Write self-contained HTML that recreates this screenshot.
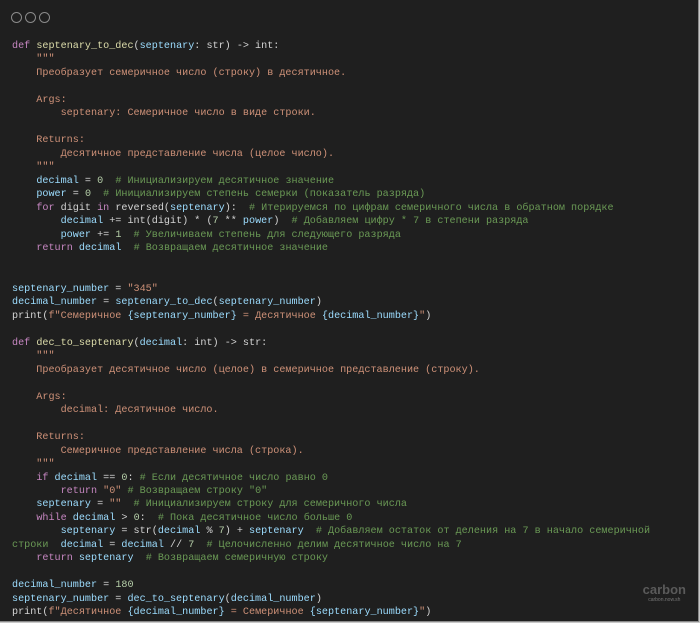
<!DOCTYPE html>
<html><head><meta charset="utf-8"><style>
html,body{margin:0;padding:0;width:700px;height:623px;overflow:hidden;background:#c8c8c8}
.win{position:absolute;left:0;top:0;width:698px;height:621px;background:#1f1f1f;border-right:1px solid #8a8a8a;border-bottom:1px solid #8a8a8a}
.dot{position:absolute;top:12px;width:9px;height:9px;border:1px solid #8a8a8a;border-radius:50%}
pre{position:absolute;left:12px;top:40px;margin:0;font-family:"Liberation Mono","Noto Sans CJK SC",monospace;font-size:10.13px;line-height:13.48px;color:#d4d4d4;white-space:pre}
.k{color:#c586c0}.f{color:#dcdcaa}.p{color:#9cdcfe}.s{color:#ce9178}.c{color:#6a9955}.n{color:#b5cea8}
.logo{position:absolute;right:12px;bottom:18px;color:#5a5a5a;font-family:"Liberation Sans",sans-serif;font-size:13px;font-weight:bold;text-align:center}
.logo small{display:block;font-size:5px;font-weight:normal;color:#777}
</style></head><body><div class="win">
<div class="dot" style="left:11px"></div><div class="dot" style="left:25px"></div><div class="dot" style="left:39px"></div>
<pre><span class="k">def</span> <span class="f">septenary_to_dec</span>(<span class="p">septenary</span>: str) -&gt; int:
<span class="s">    """
    Преобразует семеричное число (строку) в десятичное.

    Args:
        septenary: Семеричное число в виде строки.

    Returns:
        Десятичное представление числа (целое число).
    """</span>
    <span class="p">decimal</span> = <span class="n">0</span>  <span class="c"># Инициализируем десятичное значение</span>
    <span class="p">power</span> = <span class="n">0</span>  <span class="c"># Инициализируем степень семерки (показатель разряда)</span>
    <span class="k">for</span> digit <span class="k">in</span> reversed(<span class="p">septenary</span>):  <span class="c"># Итерируемся по цифрам семеричного числа в обратном порядке</span>
        <span class="p">decimal</span> += int(digit) * (<span class="n">7</span> ** <span class="p">power</span>)  <span class="c"># Добавляем цифру * 7 в степени разряда</span>
        <span class="p">power</span> += <span class="n">1</span>  <span class="c"># Увеличиваем степень для следующего разряда</span>
    <span class="k">return</span> <span class="p">decimal</span>  <span class="c"># Возвращаем десятичное значение</span>


<span class="p">septenary_number</span> = <span class="s">"345"</span>
<span class="p">decimal_number</span> = <span class="p">septenary_to_dec</span>(<span class="p">septenary_number</span>)
print(<span class="s">f"Семеричное </span><span class="p">{septenary_number}</span><span class="s"> = Десятичное </span><span class="p">{decimal_number}</span><span class="s">"</span>)

<span class="k">def</span> <span class="f">dec_to_septenary</span>(<span class="p">decimal</span>: int) -&gt; str:
<span class="s">    """
    Преобразует десятичное число (целое) в семеричное представление (строку).

    Args:
        decimal: Десятичное число.

    Returns:
        Семеричное представление числа (строка).
    """</span>
    <span class="k">if</span> <span class="p">decimal</span> == <span class="n">0</span>: <span class="c"># Если десятичное число равно 0</span>
        <span class="k">return</span> <span class="s">"0"</span> <span class="c"># Возвращаем строку "0"</span>
    <span class="p">septenary</span> = <span class="s">""</span>  <span class="c"># Инициализируем строку для семеричного числа</span>
    <span class="k">while</span> <span class="p">decimal</span> &gt; <span class="n">0</span>:  <span class="c"># Пока десятичное число больше 0</span>
        <span class="p">septenary</span> = str(<span class="p">decimal</span> % <span class="n">7</span>) + <span class="p">septenary</span>  <span class="c"># Добавляем остаток от деления на 7 в начало семеричной</span>
<span class="c">строки</span>  <span class="p">decimal</span> = <span class="p">decimal</span> // <span class="n">7</span>  <span class="c"># Целочисленно делим десятичное число на 7</span>
    <span class="k">return</span> <span class="p">septenary</span>  <span class="c"># Возвращаем семеричную строку</span>

<span class="p">decimal_number</span> = <span class="n">180</span>
<span class="p">septenary_number</span> = <span class="p">dec_to_septenary</span>(<span class="p">decimal_number</span>)
print(<span class="s">f"Десятичное </span><span class="p">{decimal_number}</span><span class="s"> = Семеричное </span><span class="p">{septenary_number}</span><span class="s">"</span>)</pre>
<div class="logo">carbon<small>carbon.now.sh</small></div>
</div></body></html>
